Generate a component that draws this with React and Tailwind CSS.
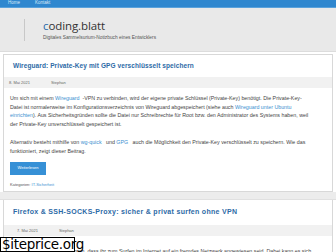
export default function App() {
  const link = "text-[#3a8fd0]";
  return (
    <div className="w-[336px] h-[252px] overflow-hidden relative bg-white font-['Liberation_Sans',Arial,sans-serif]">
      <div className="h-[8px] bg-[#2f87cf] flex items-center text-[4.5px] text-[#d6e8f7] border-b border-[#5aa2dc]">
        <span className="ml-[8px]">Home</span>
        <span className="ml-[15px]">Kontakt</span>
      </div>
      <div className="h-[44px] bg-[#e9e9e9] border-b border-[#dcdcdc] flex items-center">
        <div className="ml-[24px] w-px h-[22px] bg-[#c8c8c8]" />
        <div className="ml-[18px] flex flex-col">
          <div className="text-[11.5px] leading-[13px] text-[#333] font-['Open_Sans',sans-serif] tracking-[-0.1px]">
            <span className="text-[#2a6aa8]">c</span>oding.blatt
          </div>
          <div className="text-[4.8px] leading-[6px] text-[#555] mt-[3px]">Digitales Sammelsurium-Notizbuch eines Entwicklers</div>
        </div>
      </div>
      <div className="h-[2px]" />
      <div className="mx-[3px] border border-[#d8d8d8] bg-white">
        <div className="h-[22px] flex items-center pl-[9px] text-[6.5px] font-bold text-[#2d6aa6] tracking-[0.1px]">
          Wireguard: Private-Key mit GPG verschlüsselt speichern
        </div>
        <div className="h-[11px] bg-[#f1f1f1] flex items-center text-[4px] text-[#666] pl-[5px]">
          <span>8. Mai 2021</span>
          <span className="ml-[21px]">Stephan</span>
        </div>
        <div className="pl-[6px] pr-[22px] pt-[6px] text-[5.3px] leading-[8.7px] text-[#444]">
          <p>
            Um sich mit einem <span className={link}>Wireguard</span>&nbsp;&nbsp;-VPN zu verbinden, wird der eigene private Schlüssel (Private-Key) benötigt. Die Private-Key-Datei ist normalerweise im Konfigurationsverzeichnis von Wireguard abgespeichert (siehe auch <span className={link}>Wireguard unter Ubuntu einrichten</span>). Aus Sicherheitsgründen sollte die Datei nur Schreibrechte für Root bzw. den Administrator des Systems haben, weil der Private-Key unverschlüsselt gespeichert ist.
          </p>
          <p className="mt-[9px]">
            Alternativ besteht mithilfe von <span className={link}>wg-quick</span>&nbsp;&nbsp;&nbsp;und <span className={link}>GPG</span>&nbsp;&nbsp;&nbsp;auch die Möglichkeit den Private-Key verschlüsselt zu speichern. Wie das funktioniert, zeigt dieser Beitrag.
          </p>
          <div className="mt-[7px] w-[36px] h-[13px] bg-[#3690d6] text-white text-[4px] flex items-center justify-center">Weiterlesen</div>
          <div className="mt-[7px] pb-[4px] text-[4px] leading-[5px] text-[#555]">
            Kategorien: <span className={link}>IT-Sicherheit</span>
          </div>
        </div>
      </div>
      <div className="h-[8px] bg-[#ececec] border-b border-[#e0e0e0]" />
      <div className="mx-[3px] border-x border-[#d8d8d8] bg-white">
        <div className="h-[25px] flex items-center pl-[9px] text-[7px] font-bold text-[#2d6aa6] tracking-[0.3px]">
          Firefox &amp; SSH-SOCKS-Proxy: sicher &amp; privat surfen ohne VPN
        </div>
        <div className="h-[11px] bg-[#f1f1f1] flex items-center text-[4px] text-[#666] pl-[13px]">
          <span>7. Mai 2021</span>
          <span className="ml-[21px]">Stephan</span>
        </div>
        <div className="pl-[6px] pt-[11px] text-[5.3px] leading-[8.7px] text-[#444] whitespace-nowrap">
          Unterwegs kann es vorkommen, dass ihr zum Surfen im Internet auf ein fremdes Netzwerk angewiesen seid. Dabei kann es sich
        </div>
      </div>
      <div className="absolute left-0 top-[237px] w-[75px] h-[15px] bg-white border border-black flex items-center pl-[1px] text-[13.5px] leading-none text-black font-['DejaVu_Sans',sans-serif] tracking-[-0.3px]">
        $iteprice.org
      </div>
    </div>
  );
}
